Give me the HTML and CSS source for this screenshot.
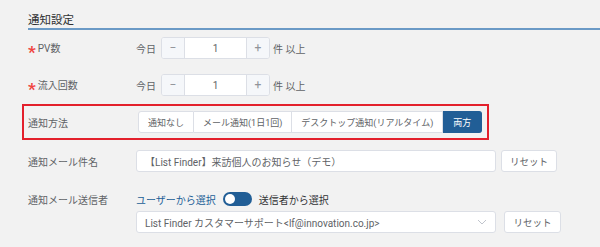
FILE: index.html
```html
<!DOCTYPE html>
<html>
<head>
  <title>通知設定</title>
  <link rel="stylesheet" href="styles.css">
</head>
<body>
  <div class="section">
    <h2 class="section-title">通知設定</h2>

    <div class="row row-first">
      <div class="label"><span class="required">*</span>PV数</div>
      <div class="field">
        <span class="prefix">今日</span>
        <div class="stepper">
          <span class="step">−</span>
          <input class="step-input" type="text" value="1">
          <span class="step">+</span>
        </div>
        <span class="suffix">件 以上</span>
      </div>
    </div>

    <div class="row row-second">
      <div class="label"><span class="required">*</span>流入回数</div>
      <div class="field">
        <span class="prefix">今日</span>
        <div class="stepper">
          <span class="step">−</span>
          <input class="step-input" type="text" value="1">
          <span class="step">+</span>
        </div>
        <span class="suffix">件 以上</span>
      </div>
    </div>

    <div class="highlight">
      <div class="label">通知方法</div>
      <div class="segments">
        <button class="segment">通知なし</button>
        <button class="segment">メール通知(1日1回)</button>
        <button class="segment">デスクトップ通知(リアルタイム)</button>
        <button class="segment active">両方</button>
      </div>
    </div>

    <div class="row row-subject">
      <div class="label">通知メール件名</div>
      <div class="field">
        <input class="text-input" type="text" value="【List Finder】来訪個人のお知らせ（デモ）">
        <button class="reset">リセット</button>
      </div>
    </div>

    <div class="row row-sender">
      <div class="label">通知メール送信者</div>
      <div class="sender">
        <div class="switch-line">
          <span class="switch-left">ユーザーから選択</span>
          <span class="switch"><span class="knob"></span></span>
          <span class="switch-right">送信者から選択</span>
        </div>
        <div class="field">
          <div class="select">
            <span>List Finder カスタマーサポート&lt;lf@innovation.co.jp&gt;</span>
            <svg class="chevron" width="10" height="6" viewBox="0 0 10 6"><path d="M1 1l4 4 4-4" fill="none" stroke="#c0c4cc" stroke-width="1"/></svg>
          </div>
          <button class="reset reset-wide">リセット</button>
        </div>
      </div>
    </div>
  </div>
</body>
</html>
```

FILE: styles.css
```css
body {
  margin: 0;
  background-color: #f2f2f2;
  font-family: Roboto, "Noto Sans CJK JP", sans-serif;
  color: #606266;
}
.section {
  padding: 12px 0 0 28px;
}
.section-title {
  margin: 0;
  font-size: 11.5px;
  font-weight: normal;
  line-height: 16px;
  color: #303133;
  border-bottom: 2px solid #6b9ac6;
}
.row {
  display: flex;
  align-items: center;
}
.row-first {
  margin-top: 7px;
}
.row-second {
  margin-top: 15px;
}
.row-subject {
  margin-top: 10px;
}
.row-sender {
  margin-top: 20px;
  align-items: flex-start;
}
.label {
  width: 108px;
  flex-shrink: 0;
  font-size: 10px;
  color: #606266;
}
.required {
  color: #f0453f;
  font-size: 17px;
  font-weight: bold;
  margin-right: 2px;
  vertical-align: -6px;
  line-height: 10px;
}
.field {
  display: flex;
  align-items: center;
}
.prefix {
  font-size: 10px;
  margin-right: 5px;
}
.suffix {
  font-size: 10px;
  margin-left: 3px;
}
.stepper {
  display: flex;
  height: 22px;
  border: 1px solid #dcdfe6;
  border-radius: 3px;
  box-sizing: border-box;
  background-color: #fff;
  overflow: hidden;
}
.step {
  width: 22px;
  background-color: #f5f7fa;
  color: #909399;
  font-size: 12px;
  line-height: 20px;
  text-align: center;
}
.step:first-child {
  border-right: 1px solid #dcdfe6;
}
.step:last-child {
  border-left: 1px solid #dcdfe6;
}
.step-input {
  width: 61px;
  border: none;
  padding: 0;
  text-align: center;
  font-family: inherit;
  font-size: 10px;
  color: #606266;
  outline: none;
}
.highlight {
  display: flex;
  align-items: center;
  width: max-content;
  margin: 8px 0 0 -6px;
  padding: 5px 5px 5px 4px;
  border: 2px solid #e3202c;
}
.highlight .label {
  width: 110px;
}
.segments {
  display: flex;
}
.segment {
  flex-shrink: 0;
  height: 22px;
  padding: 0 9px;
  white-space: nowrap;
  background-color: #fff;
  border: 1px solid #dcdfe6;
  border-left: none;
  font-family: inherit;
  font-size: 9px;
  color: #606266;
}
.segment:first-child {
  border-left: 1px solid #dcdfe6;
  border-radius: 3px 0 0 3px;
}
.segment.active {
  padding: 0 10px;
  background-color: #215e96;
  border-color: #215e96;
  color: #fff;
  border-radius: 0 3px 3px 0;
}
.text-input {
  width: 360px;
  height: 22px;
  box-sizing: border-box;
  padding: 0 8px;
  border: 1px solid #dcdfe6;
  border-radius: 3px;
  background-color: #fff;
  font-family: inherit;
  font-size: 10px;
  color: #606266;
}
.reset {
  width: 56px;
  height: 22px;
  margin-left: 5px;
  background-color: #fff;
  border: 1px solid #dcdfe6;
  border-radius: 3px;
  font-family: inherit;
  font-size: 9.5px;
  color: #606266;
}
.reset-wide {
  width: 57px;
  margin-left: 8px;
}
.sender {
  display: flex;
  flex-direction: column;
}
.switch-line {
  display: flex;
  align-items: center;
  height: 14px;
  font-size: 10px;
}
.switch-left {
  color: #215e96;
}
.switch-right {
  color: #303133;
}
.switch {
  position: relative;
  width: 29px;
  height: 14px;
  margin: 0 7px;
  border-radius: 7px;
  background-color: #215e96;
}
.knob {
  position: absolute;
  top: 2px;
  left: 2px;
  width: 10px;
  height: 10px;
  border-radius: 50%;
  background-color: #fff;
}
.sender .field {
  margin-top: 5px;
}
.select {
  display: flex;
  align-items: center;
  justify-content: space-between;
  width: 360px;
  height: 22px;
  box-sizing: border-box;
  padding: 0 8px;
  border: 1px solid #dcdfe6;
  border-radius: 3px;
  background-color: #fff;
  font-size: 10px;
  color: #606266;
}
```
